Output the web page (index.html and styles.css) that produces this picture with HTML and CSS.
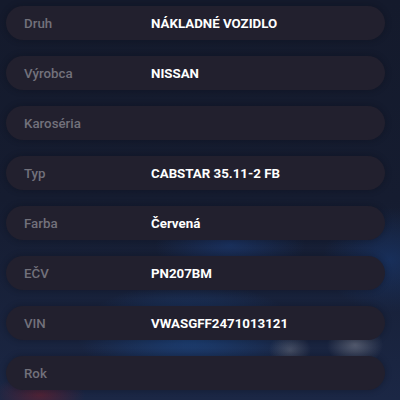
FILE: index.html
```html
<!DOCTYPE html>
<html lang="sk">
<head>
    <meta charset="UTF-8">
    <meta name="viewport" content="width=device-width, initial-scale=1.0">
    <title>Vozidlo</title>
    <link rel="stylesheet" href="styles.css">
</head>
<body>
    <div class="details">
        <div class="row"><span class="label">Druh</span><span class="value">NÁKLADNÉ VOZIDLO</span></div>
        <div class="row"><span class="label">Výrobca</span><span class="value">NISSAN</span></div>
        <div class="row"><span class="label">Karoséria</span><span class="value"></span></div>
        <div class="row"><span class="label">Typ</span><span class="value">CABSTAR 35.11-2 FB</span></div>
        <div class="row"><span class="label">Farba</span><span class="value">Červená</span></div>
        <div class="row"><span class="label">EČV</span><span class="value">PN207BM</span></div>
        <div class="row"><span class="label">VIN</span><span class="value">VWASGFF2471013121</span></div>
        <div class="row"><span class="label">Rok</span><span class="value"></span></div>
    </div>
</body>
</html>
```

FILE: styles.css
```css
html, body {
    height: 100%;
}

body {
    margin: 0;
    padding: 6px 15px 0 6px;
    box-sizing: border-box;
    overflow: hidden;
    font-family: Roboto, 'Liberation Sans', sans-serif;
    background:
        radial-gradient(ellipse 40px 30px at 355px 345px, rgba(120, 125, 140, 0.6), transparent 70%),
        radial-gradient(ellipse 30px 25px at 290px 350px, rgba(110, 115, 130, 0.5), transparent 70%),
        radial-gradient(ellipse 150px 70px at 190px 335px, rgba(30, 75, 140, 0.7), transparent 75%),
        radial-gradient(ellipse 100px 50px at 230px 245px, rgba(30, 70, 140, 0.45), transparent 75%),
        radial-gradient(ellipse 60px 30px at 40px 395px, rgba(130, 30, 40, 0.5), transparent 75%),
        radial-gradient(ellipse 90px 70px at 390px 260px, rgba(25, 60, 120, 0.55), transparent 75%),
        linear-gradient(180deg, #141a2c 0%, #151c30 50%, #1b2745 100%);
}

.details {
    display: flex;
    flex-direction: column;
    gap: 16px;
}

.row {
    display: flex;
    align-items: center;
    height: 34px;
    padding-left: 18px;
    border-radius: 17px;
    background: #22202e;
    box-shadow: 0 0 6px rgba(10, 12, 20, 0.35);
}

.label {
    width: 127px;
    color: #72717b;
    font-size: 13.3px;
    font-weight: 500;
}

.value {
    color: #ffffff;
    font-size: 13.3px;
    font-weight: 700;
}
```
